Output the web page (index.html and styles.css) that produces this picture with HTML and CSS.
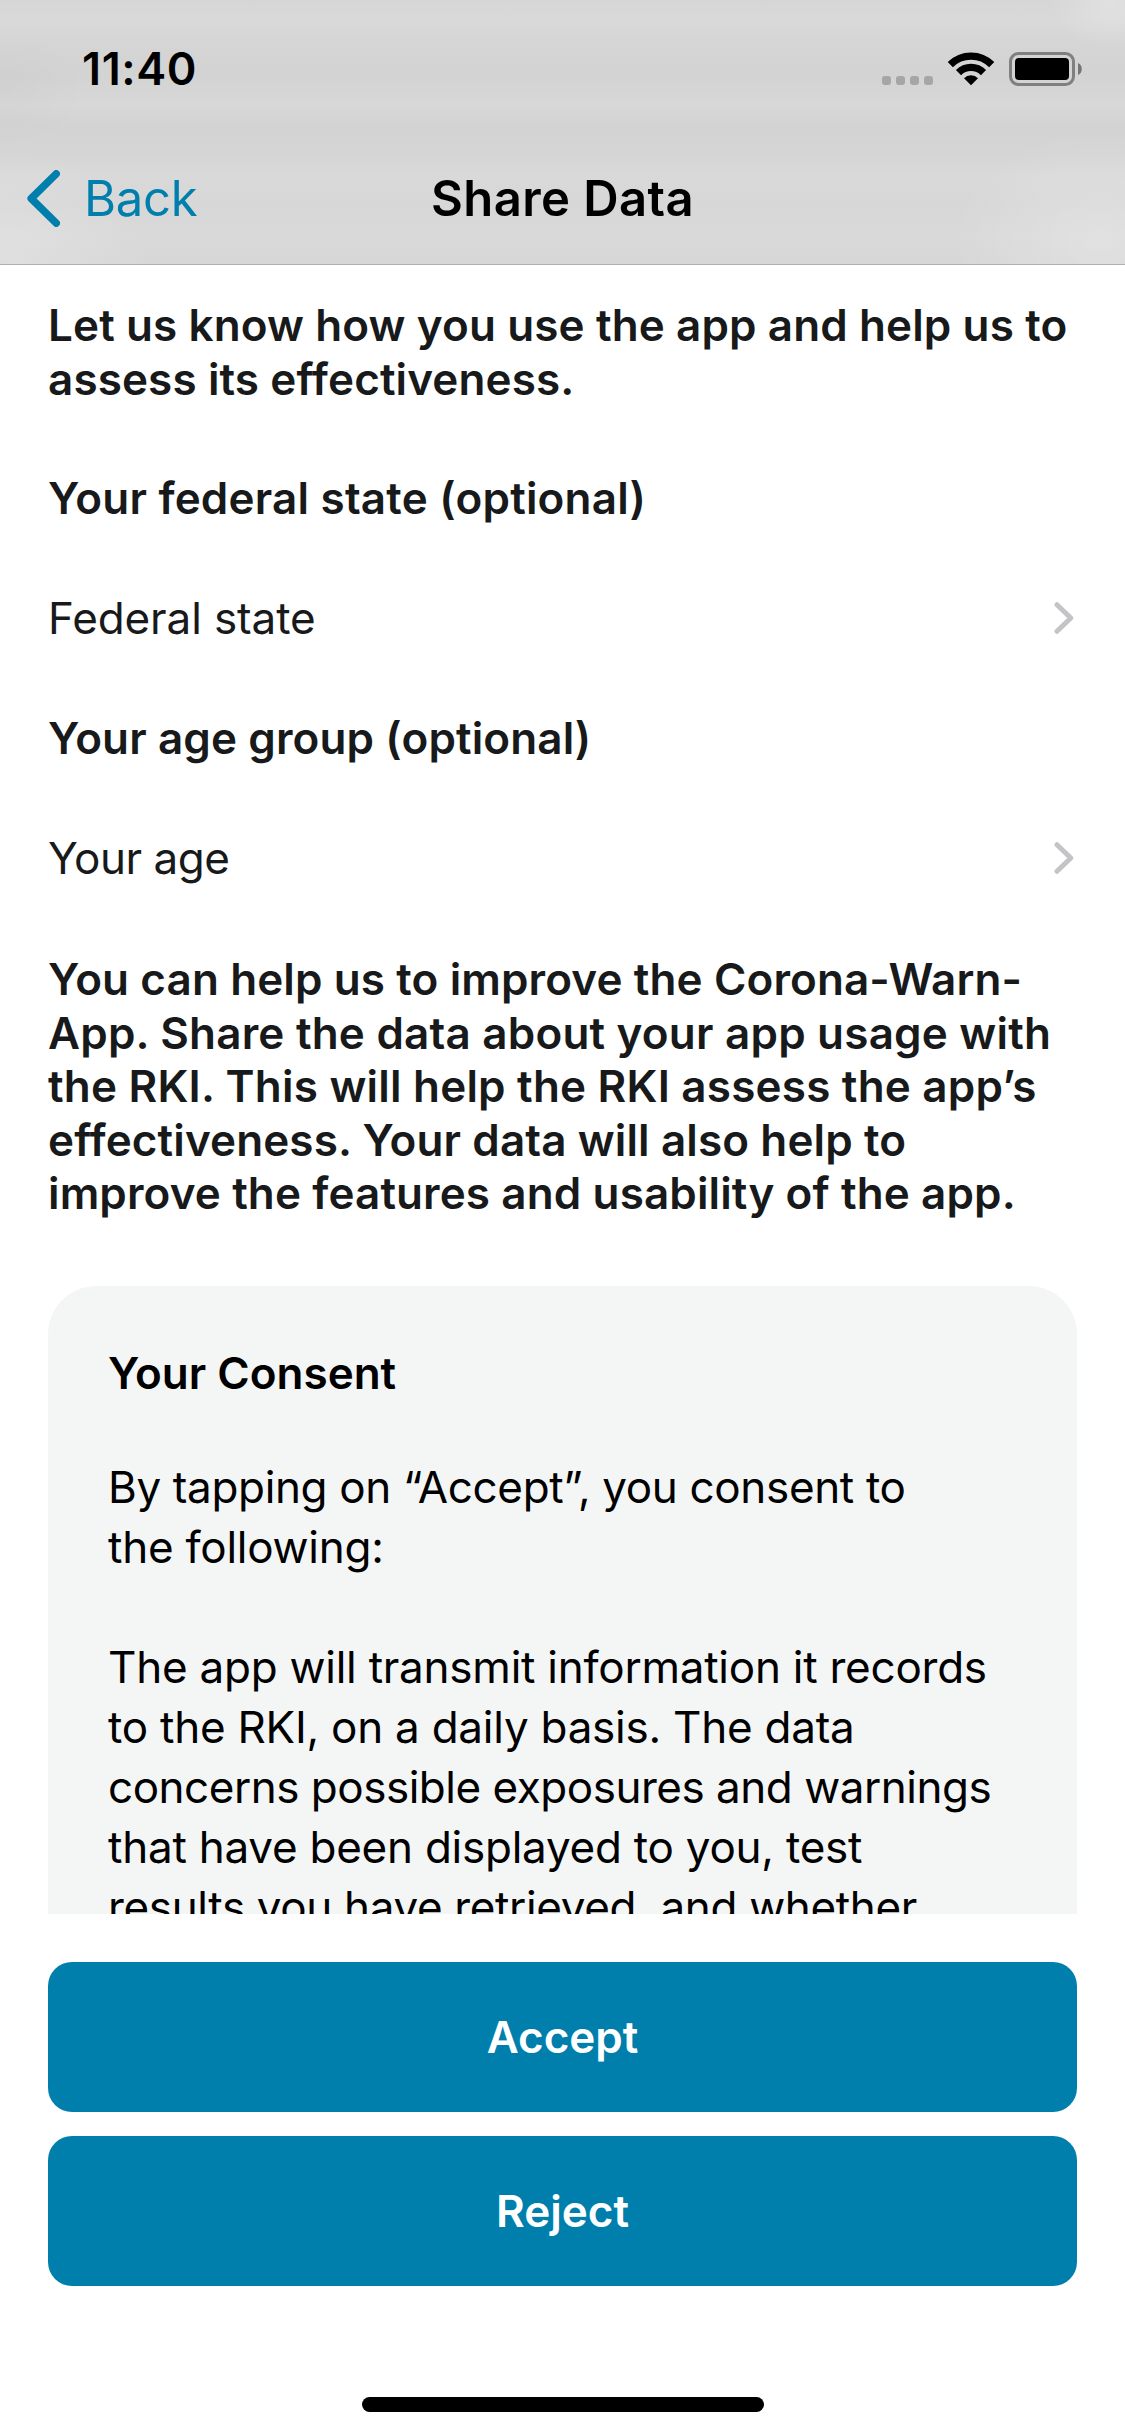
FILE: index.html
```html
<!DOCTYPE html>
<html lang="en">
<head>
<meta charset="utf-8">
<title>Share Data</title>
<link rel="stylesheet" href="styles.css">
</head>
<body>
<div class="screen">
  <header class="header">
    <div class="status">
      <span class="time">11:40</span>
      <svg class="status-icons" width="201" height="34" viewBox="0 0 201 34">
        <g fill="#a6a6a6">
          <rect x="0" y="24" width="9" height="9" rx="3"/>
          <rect x="14" y="24" width="9" height="9" rx="3"/>
          <rect x="28" y="24" width="9" height="9" rx="3"/>
          <rect x="42" y="24" width="9" height="9" rx="3"/>
        </g>
        <g fill="none" stroke="#000" stroke-width="7.3">
          <path d="M68.3 12.6A29.3 29.3 0 0 1 109.700 12.600"/>
          <path d="M76.500 20.600A17.800 17.800 0 0 1 101.500 20.600"/>
        </g>
        <path d="M89 33.300L82 26.200A10 10 0 0 1 96 26.200Z"/>
        <rect x="128.500" y="1.500" width="63" height="31" rx="8" fill="none" stroke="#808080" stroke-width="3"/>
        <rect x="133" y="6" width="54" height="22" rx="4"/>
        <path d="M196 11C201 12.500 201 21.500 196 23Z" fill="#757575"/>
      </svg>
    </div>
    <nav class="nav">
      <a class="back">
        <svg width="33" height="57" viewBox="0 0 33 57"><path d="M29.200 3.800L4.200 28.500L29.200 53.200" fill="none" stroke="#007fad" stroke-width="7.500" stroke-linecap="round" stroke-linejoin="round"/></svg>
        <span>Back</span>
      </a>
      <h1 class="title">Share Data</h1>
      <span></span>
    </nav>
  </header>
  <main class="content">
    <p class="strong intro"><span class="line wide-1">Let us know how you use the app and help us to</span><span class="line wide-1">assess its effectiveness.</span></p>
    <h2 class="strong row wide-2">Your federal state (optional)</h2>
    <div class="row tight-1"><span>Federal state</span><svg class="chevron" width="20" height="32" viewBox="0 0 20 32"><path d="M3 2.700L16.800 16L3 29.300"/></svg></div>
    <h2 class="strong row wide-1">Your age group (optional)</h2>
    <div class="row tight-4"><span>Your age</span><svg class="chevron" width="20" height="32" viewBox="0 0 20 32"><path d="M3 2.700L16.800 16L3 29.300"/></svg></div>
    <p class="strong info"><span class="line wide-1">You can help us to improve the Corona-Warn-</span><span class="line wide-2">App. Share the data about your app usage with</span><span class="line wide-2">the RKI. This will help the RKI assess the app’s</span><span class="line wide-1">effectiveness. Your data will also help to</span><span class="line wide-1">improve the features and usability of the app.</span></p>
    <section class="card">
      <h2 class="strong consent-title">Your Consent</h2>
      <p><span class="line tight-3">By tapping on “Accept”, you consent to</span><span class="line tight-2">the following:</span></p>
      <p><span class="line tight-2">The app will transmit information it records</span><span class="line tight-2">to the RKI, on a daily basis. The data</span><span class="line tight-4">concerns possible exposures and warnings</span><span class="line tight-2">that have been displayed to you, test</span><span class="line tight-3">results you have retrieved, and whether</span></p>
    </section>
  </main>
  <footer class="footer">
    <button class="button">Accept</button>
    <button class="button">Reject</button>
    <div class="home-indicator"></div>
  </footer>
</div>
</body>
</html>
```
FILE: styles.css
```css
* {
  box-sizing: border-box;
  margin: 0;
  padding: 0;
}

body {
  font-family: Inter, "Liberation Sans", sans-serif;
  background: #fff;
}

.screen {
  width: 1125px;
  height: 2436px;
  overflow: hidden;
  display: flex;
  flex-direction: column;
}

/* Translucent navigation bar */
.header {
  height: 265px;
  border-bottom: 1px solid #b0b0b1;
  background:
    radial-gradient(ellipse 150px 110px at 0 255px, rgba(255, 255, 255, 0.2), transparent),
    radial-gradient(ellipse 150px 110px at 1100px 240px, rgba(255, 255, 255, 0.22), transparent),
    radial-gradient(ellipse 60px 50px at 1110px 0, rgba(255, 255, 255, 0.25), transparent),
    radial-gradient(ellipse 90px 60px at 0 90px, rgba(0, 0, 0, 0.02), transparent),
    linear-gradient(#d6d6d6 0, #d9d9d9 20px, #d5d5d5 45px, #d3d3d3 75px, #d8d8d8 106px, #d3d3d3 125px, #d5d5d5 155px, #d9d9d9 175px, #d7d7d7 205px, #d9d9d9 235px, #d7d7d7 265px);
}

.status {
  height: 132px;
  padding: 6px 42px 0 82px;
  display: flex;
  align-items: center;
  justify-content: space-between;
}

.time {
  margin-bottom: 1px;
  font-size: 45px;
  font-weight: 600;
  letter-spacing: 0.6px;
}

.nav {
  height: 132px;
  padding: 0 27px;
  display: grid;
  grid-template-columns: 1fr auto 1fr;
  align-items: center;
}

.back {
  display: flex;
  align-items: center;
  gap: 24px;
  font-size: 49px;
  letter-spacing: -0.3px;
  color: #007fad;
}

.title {
  font-size: 49px;
  font-weight: 600;
  letter-spacing: 0.4px;
}

/* Scrolling area */
.content {
  height: 1649px;
  padding: 34px 48px 0;
  overflow: hidden;
  font-size: 44px;
  line-height: 53.6px;
  color: #17191a;
}

.strong {
  font-size: 44px;
  font-weight: 600;
}

.line {
  display: block;
  white-space: nowrap;
}

.wide-1 { letter-spacing: 0.12px; }
.wide-2 { letter-spacing: 0.21px; }
.tight-1 { letter-spacing: -0.1px; }
.tight-2 { letter-spacing: -0.24px; }
.tight-3 { letter-spacing: -0.35px; }
.tight-4 { letter-spacing: -0.48px; }

.intro {
  height: 140px;
}

.row {
  height: 120px;
  padding-right: 3px;
  display: flex;
  align-items: center;
  justify-content: space-between;
}

.chevron {
  margin-bottom: 3px;
  fill: none;
  stroke: #c4c4c6;
  stroke-width: 5;
  stroke-linecap: round;
  stroke-linejoin: round;
}

.info {
  height: 367px;
  padding-top: 34px;
}

.card {
  height: 900px;
  padding: 60px 60px 0;
  border-radius: 48px;
  background: #f4f6f6;
  color: #000;
  line-height: 60px;
}

.card p + p {
  margin-top: 60px;
}

.consent-title {
  margin-bottom: 57px;
  line-height: 54px;
}

/* Actions */
.footer {
  padding: 48px 48px 0;
  display: flex;
  flex-direction: column;
  align-items: center;
}

.button {
  width: 100%;
  height: 150px;
  margin-bottom: 24px;
  border: 0;
  border-radius: 24px;
  background: #007fad;
  color: #fff;
  font: 600 44px Inter, "Liberation Sans", sans-serif;
}

.home-indicator {
  width: 402px;
  height: 15px;
  margin-top: 87px;
  border-radius: 8px;
  background: #000;
}
```
